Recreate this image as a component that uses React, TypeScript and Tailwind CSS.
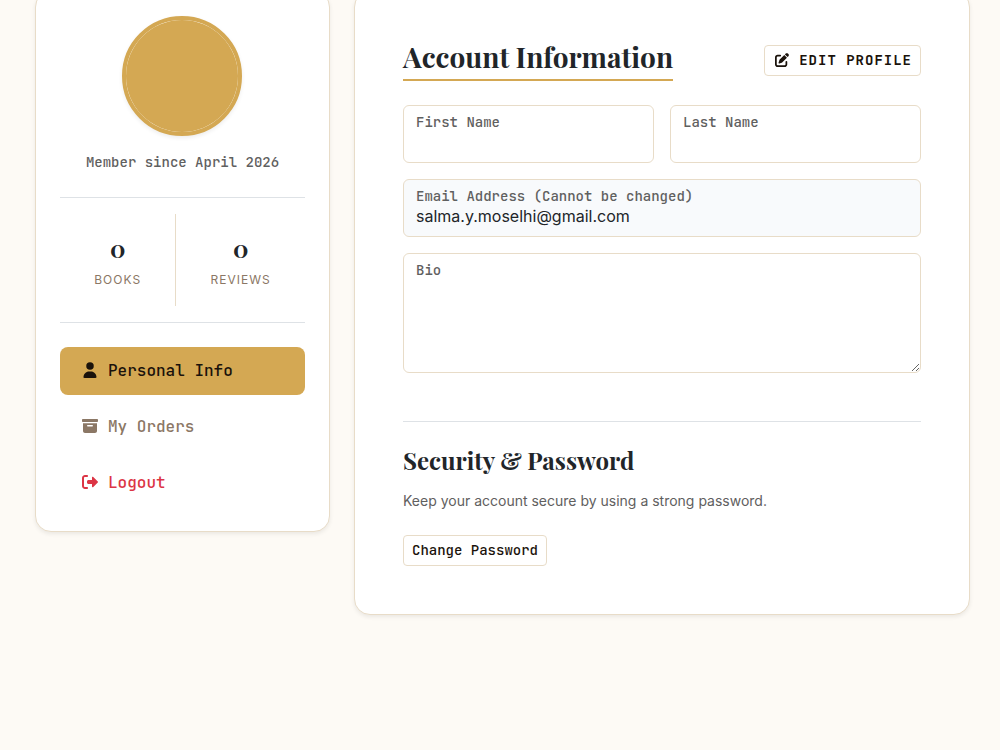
import { FC, ReactNode } from "react";
import { FaPenToSquare } from "react-icons/fa6";

interface IconProps {
	path: string;
	viewBox?: string;
}

const Icon: FC<IconProps> = ({ path, viewBox = "0 0 512 512" }) => (
	<span className="flex w-5 justify-center pb-0.5" aria-hidden="true">
		<svg className="h-4 w-auto" viewBox={viewBox} fill="currentColor">
			<path d={path} />
		</svg>
	</span>
);

const USER_PATH =
	"M224 248a120 120 0 1 0 0-240 120 120 0 1 0 0 240zm-29.7 56C95.8 304 16 383.8 16 482.3 16 498.7 29.3 512 45.7 512l356.6 0c16.4 0 29.7-13.3 29.7-29.7 0-98.5-79.8-178.3-178.3-178.3l-59.4 0z";
const ARCHIVE_PATH =
	"M0 64C0 46.3 14.3 32 32 32l448 0c17.7 0 32 14.3 32 32l0 32c0 17.7-14.3 32-32 32L32 128C14.3 128 0 113.7 0 96L0 64zM32 168l448 0 0 248c0 35.3-28.7 64-64 64L96 480c-35.3 0-64-28.7-64-64l0-248zm152 56c-13.3 0-24 10.7-24 24s10.7 24 24 24l144 0c13.3 0 24-10.7 24-24s-10.7-24-24-24l-144 0z";
const LOGOUT_PATH =
	"M505 273c9.4-9.4 9.4-24.6 0-33.9L361 95c-6.9-6.9-17.2-8.9-26.2-5.2S320 102.3 320 112l0 80-112 0c-26.5 0-48 21.5-48 48l0 32c0 26.5 21.5 48 48 48l112 0 0 80c0 9.7 5.8 18.5 14.8 22.2s19.3 1.7 26.2-5.2L505 273zM160 96c17.7 0 32-14.3 32-32s-14.3-32-32-32L96 32C43 32 0 75 0 128l0 256c0 53 43 96 96 96l64 0c17.7 0 32-14.3 32-32s-14.3-32-32-32l-64 0c-17.7 0-32-14.3-32-32l0-256c0-17.7 14.3-32 32-32l64 0z";

const Stat: FC<{ value: number; label: string }> = ({ value, label }) => (
	<div className="flex-auto py-4 text-center">
		<p className="mb-1 font-['Playfair_Display','Liberation_Serif',serif] text-2xl/9 font-bold text-[#212529]">
			{value}
		</p>
		<p className="text-xs/5 tracking-[1px] text-[#8b7765] uppercase">
			{label}
		</p>
	</div>
);

interface FieldProps {
	id: string;
	label: string;
	disabled?: boolean;
	children: ReactNode;
}

const Field: FC<FieldProps> = ({ id, label, disabled, children }) => (
	<div
		className={`flex flex-col rounded-md border border-[#e8dcc8] pt-1.5 ${
			disabled ? "bg-[#f8fafc]" : "bg-white"
		}`}
	>
		<label
			htmlFor={id}
			className="px-3 font-['JetBrains_Mono','DejaVu_Sans_Mono',monospace] text-sm/5 font-medium text-[#5f6060]"
		>
			{label}
		</label>
		{children}
	</div>
);

const inputStyle =
	"w-full bg-transparent px-3 pb-2.5 text-base/5 text-[#212529] outline-none";

const Sidebar: FC = () => (
	<aside className="rounded-2xl border border-[#e8dcc8] bg-white p-6 shadow-[0_2px_4px_rgba(0,0,0,0.075)]">
		<div className="mx-auto size-30 rounded-full border-4 border-[#d4a853] bg-[#d4a853] bg-clip-padding shadow-[0_2px_4px_rgba(0,0,0,0.075)]" />
		<p className="mt-4 mb-6 text-center font-['JetBrains_Mono','DejaVu_Sans_Mono',monospace] text-sm/[21px] font-medium text-[#5f6060]">
			Member since April 2026
		</p>
		<div className="flex divide-x divide-[#e8dcc8] border-y border-[#dee2e6] py-4">
			<Stat value={0} label="Books" />
			<Stat value={0} label="Reviews" />
		</div>
		<nav className="mt-6 flex flex-col gap-2 font-['JetBrains_Mono','DejaVu_Sans_Mono',monospace] text-base/6 font-medium">
			<a
				href="#info"
				className="flex items-center gap-2 rounded-lg bg-[#d4a853] px-5 py-3 text-[#1a120b]"
			>
				<Icon path={USER_PATH} viewBox="0 0 448 512" />
				Personal Info
			</a>
			<a
				href="#orders"
				className="flex items-center gap-2 rounded-lg px-5 py-3 text-[#8b7765]"
			>
				<Icon path={ARCHIVE_PATH} />
				My Orders
			</a>
			<button
				type="button"
				className="flex items-center gap-2 rounded-lg px-5 py-3 text-[#dc3545]"
			>
				<Icon path={LOGOUT_PATH} />
				Logout
			</button>
		</nav>
	</aside>
);

const AccountPanel: FC = () => (
	<main className="rounded-2xl border border-[#e8dcc8] bg-white p-12 shadow-[0_2px_4px_rgba(0,0,0,0.075)]">
		<div className="mb-6 flex items-center justify-between">
			<h1 className="border-b-2 border-[#d4a853] pb-[5px] font-['Playfair_Display','Liberation_Serif',serif] text-[28px]/[34px] font-bold text-[#212529]">
				Account Information
			</h1>
			<button
				type="button"
				className="flex items-center gap-2 rounded-sm border border-[#e8dcc8] px-2 py-1 font-['JetBrains_Mono','DejaVu_Sans_Mono',monospace] text-sm/[21px] font-semibold tracking-[1px] text-[#1a120b] uppercase"
			>
				<span className="flex w-[18px] justify-center pb-0.5">
					<FaPenToSquare aria-hidden="true" />
				</span>
				Edit Profile
			</button>
		</div>
		<form className="grid gap-4">
			<div className="grid grid-cols-2 gap-4">
				<Field id="firstName" label="First Name">
					<input id="firstName" type="text" className={inputStyle} />
				</Field>
				<Field id="lastName" label="Last Name">
					<input id="lastName" type="text" className={inputStyle} />
				</Field>
			</div>
			<Field id="email" label="Email Address (Cannot be changed)" disabled>
				<input
					id="email"
					type="email"
					className={inputStyle}
					defaultValue="salma.y.moselhi@gmail.com"
					readOnly
				/>
			</Field>
			<Field id="bio" label="Bio">
				<textarea id="bio" className={`${inputStyle} h-23 resize-y`} />
			</Field>
		</form>
		<section className="mt-12 border-t border-[#dee2e6] pt-6">
			<h2 className="mb-4 font-['Playfair_Display','Liberation_Serif',serif] text-2xl/7 font-bold text-[#212529]">
				Security &amp; Password
			</h2>
			<p className="mb-6 text-sm/[21px] text-[#5f6060]">
				Keep your account secure by using a strong password.
			</p>
			<button
				type="button"
				className="block rounded-sm border border-[#e8dcc8] px-2 py-1 font-['JetBrains_Mono','DejaVu_Sans_Mono',monospace] text-sm/[21px] font-medium text-[#1a120b]"
			>
				Change Password
			</button>
		</section>
	</main>
);

const App: FC = () => (
	<div className="flow-root min-h-screen overflow-hidden bg-[#fdfaf5] font-[Inter,sans-serif]">
		<div className="-mt-[9px] grid grid-cols-[34fr_71fr] items-start gap-6 pr-[30px] pl-[35px]">
			<Sidebar />
			<AccountPanel />
		</div>
	</div>
);

export default App;
